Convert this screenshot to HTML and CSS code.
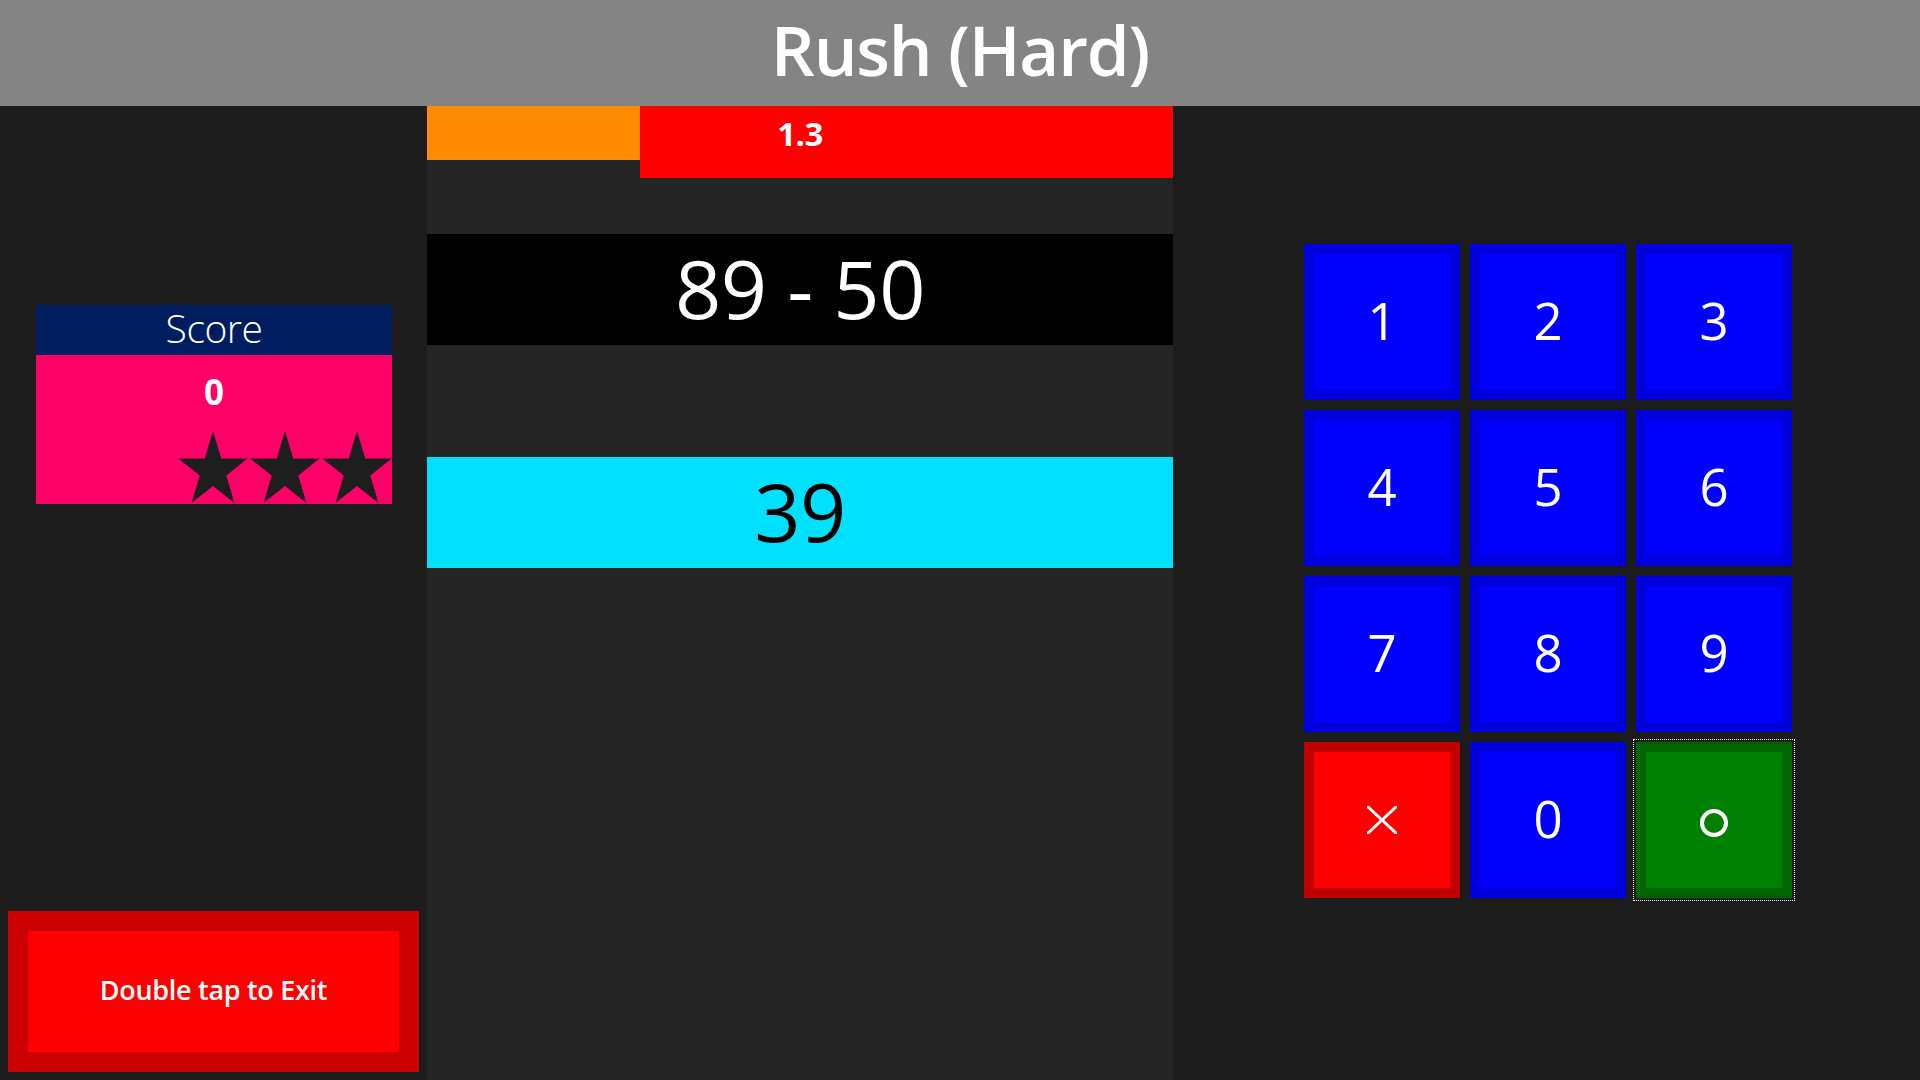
FILE: index.html
```html
<!DOCTYPE html>
<html lang="en">
<head>
<meta charset="utf-8">
<title>Rush (Hard)</title>
<link rel="stylesheet" href="styles.css">
</head>
<body>
<header class="topbar"><h1 class="title">Rush (Hard)</h1></header>
<main class="board">
  <section class="side">
    <div class="score-card">
      <div class="score-head">Score</div>
      <div class="score-body">
        <div class="score-value">0</div>
        <div class="stars">
          <svg class="star" viewBox="0 0 70 66.03" preserveAspectRatio="none"><polygon points="35,0 43.19,25.22 69.71,25.22 48.26,40.81 56.45,66.03 35,50.44 13.55,66.03 21.74,40.81 0.29,25.22 26.81,25.22"/></svg>
          <svg class="star" viewBox="0 0 70 66.03" preserveAspectRatio="none"><polygon points="35,0 43.19,25.22 69.71,25.22 48.26,40.81 56.45,66.03 35,50.44 13.55,66.03 21.74,40.81 0.29,25.22 26.81,25.22"/></svg>
          <svg class="star" viewBox="0 0 70 66.03" preserveAspectRatio="none"><polygon points="35,0 43.19,25.22 69.71,25.22 48.26,40.81 56.45,66.03 35,50.44 13.55,66.03 21.74,40.81 0.29,25.22 26.81,25.22"/></svg>
        </div>
      </div>
    </div>
    <button class="exit-btn">Double tap to Exit</button>
  </section>

  <section class="play">
    <div class="timer">
      <div class="timer-elapsed"></div>
      <div class="timer-left"></div>
      <div class="timer-label">1.3</div>
    </div>
    <div class="question">89 - 50</div>
    <div class="answer">39</div>
  </section>

  <section class="pad-area">
    <div class="keypad">
      <button class="key key-num">1</button>
      <button class="key key-num">2</button>
      <button class="key key-num">3</button>
      <button class="key key-num">4</button>
      <button class="key key-num">5</button>
      <button class="key key-num">6</button>
      <button class="key key-num">7</button>
      <button class="key key-num">8</button>
      <button class="key key-num">9</button>
      <button class="key key-clear" aria-label="Clear"><svg class="icon-x" viewBox="0 0 30 28"><line x1="1" y1="1" x2="29" y2="27"/><line x1="29" y1="1" x2="1" y2="27"/></svg></button>
      <button class="key key-num">0</button>
      <button class="key key-ok" aria-label="OK"><svg class="icon-o" viewBox="0 0 30 30"><circle cx="15" cy="15" r="12"/></svg></button>
    </div>
  </section>
</main>
</body>
</html>
```
FILE: styles.css
```css
* { box-sizing: border-box; }

html, body {
  margin: 0;
  padding: 0;
  width: 1920px;
  height: 1080px;
  overflow: hidden;
  background: #1c1c1c;
  font-family: "Open Sans", "Noto Sans", "Liberation Sans", sans-serif;
  color: #fff;
}

.topbar {
  height: 106px;
  background: #848484;
  display: flex;
  align-items: center;
  justify-content: center;
}

.title {
  margin: 0;
  font-size: 69px;
  font-weight: 600;
  letter-spacing: -1.2px;
  line-height: 1;
  color: #fff;
  padding-bottom: 8px;
}

.board {
  display: flex;
  height: 974px;
}

/* left column */
.side {
  width: 427px;
  background: #1c1c1c;
  display: flex;
  flex-direction: column;
  padding: 199px 0 8px 0;
}

.score-card {
  width: 356px;
  margin-left: 36px;
}

.score-head {
  height: 50px;
  background: #001e5f;
  display: flex;
  align-items: center;
  justify-content: center;
  font-size: 39px;
  font-weight: 300;
  letter-spacing: -0.5px;
  padding-bottom: 6px;
}

.score-body {
  height: 149px;
  background: #ff0066;
  display: flex;
  flex-direction: column;
}

.score-value {
  height: 76px;
  display: flex;
  align-items: center;
  justify-content: center;
  font-size: 35px;
  font-weight: 700;
  padding-bottom: 4px;
}

.stars {
  display: flex;
  justify-content: flex-end;
  gap: 2px;
  height: 73px;
}

.star {
  width: 70px;
  height: 72px;
  fill: #1e1e1e;
}

.exit-btn {
  margin-top: auto;
  margin-left: 8px;
  width: 411px;
  height: 161px;
  border: 20px solid #cc0000;
  background: #ff0000;
  color: #fff;
  font-family: inherit;
  font-size: 27px;
  font-weight: 600;
  letter-spacing: -0.3px;
  padding: 0 0 4px 0;
  cursor: pointer;
}

/* middle column */
.play {
  width: 746px;
  background: #252525;
  display: flex;
  flex-direction: column;
}

.timer {
  position: relative;
  display: flex;
  align-items: flex-start;
  height: 72px;
}

.timer-elapsed {
  width: 213px;
  height: 54px;
  background: #ff8c00;
}

.timer-left {
  flex: 1;
  height: 72px;
  background: #ff0000;
}

.timer-label {
  position: absolute;
  left: 0;
  right: 0;
  top: 0;
  height: 58px;
  line-height: 56px;
  text-align: center;
  font-size: 33px;
  font-weight: 700;
  letter-spacing: -0.5px;
}

.question,
.answer {
  height: 111px;
  display: flex;
  align-items: center;
  justify-content: center;
  font-size: 81px;
  font-weight: 400;
  letter-spacing: -0.5px;
  padding-bottom: 4px;
}

.question {
  margin-top: 56px;
  background: #000;
  color: #fff;
}

.answer {
  margin-top: 112px;
  background: #00e1ff;
  color: #000;
}

/* right column */
.pad-area {
  flex: 1;
  background: #1c1c1c;
  padding: 138px 0 0 131px;
}

.keypad {
  display: grid;
  grid-template-columns: repeat(3, 156px);
  grid-auto-rows: 156px;
  gap: 10px;
}

.key {
  border: 10px solid #0000dc;
  background: #0000ff;
  color: #fff;
  font-family: inherit;
  font-size: 51px;
  font-weight: 400;
  padding: 0 0 4px 0;
  display: flex;
  align-items: center;
  justify-content: center;
  cursor: pointer;
}

.key-clear {
  border-color: #c00000;
  background: #ff0000;
  padding: 0;
}

.key-ok {
  border-color: #006400;
  background: #008000;
  outline: 1px dotted #fff;
  outline-offset: 2px;
  padding: 6px 0 0 0;
}

.icon-x {
  width: 30px;
  height: 28px;
  stroke: #fff;
  stroke-width: 3;
  stroke-linecap: square;
}

.icon-o {
  width: 30px;
  height: 30px;
  fill: none;
  stroke: #fff;
  stroke-width: 4;
}
```
